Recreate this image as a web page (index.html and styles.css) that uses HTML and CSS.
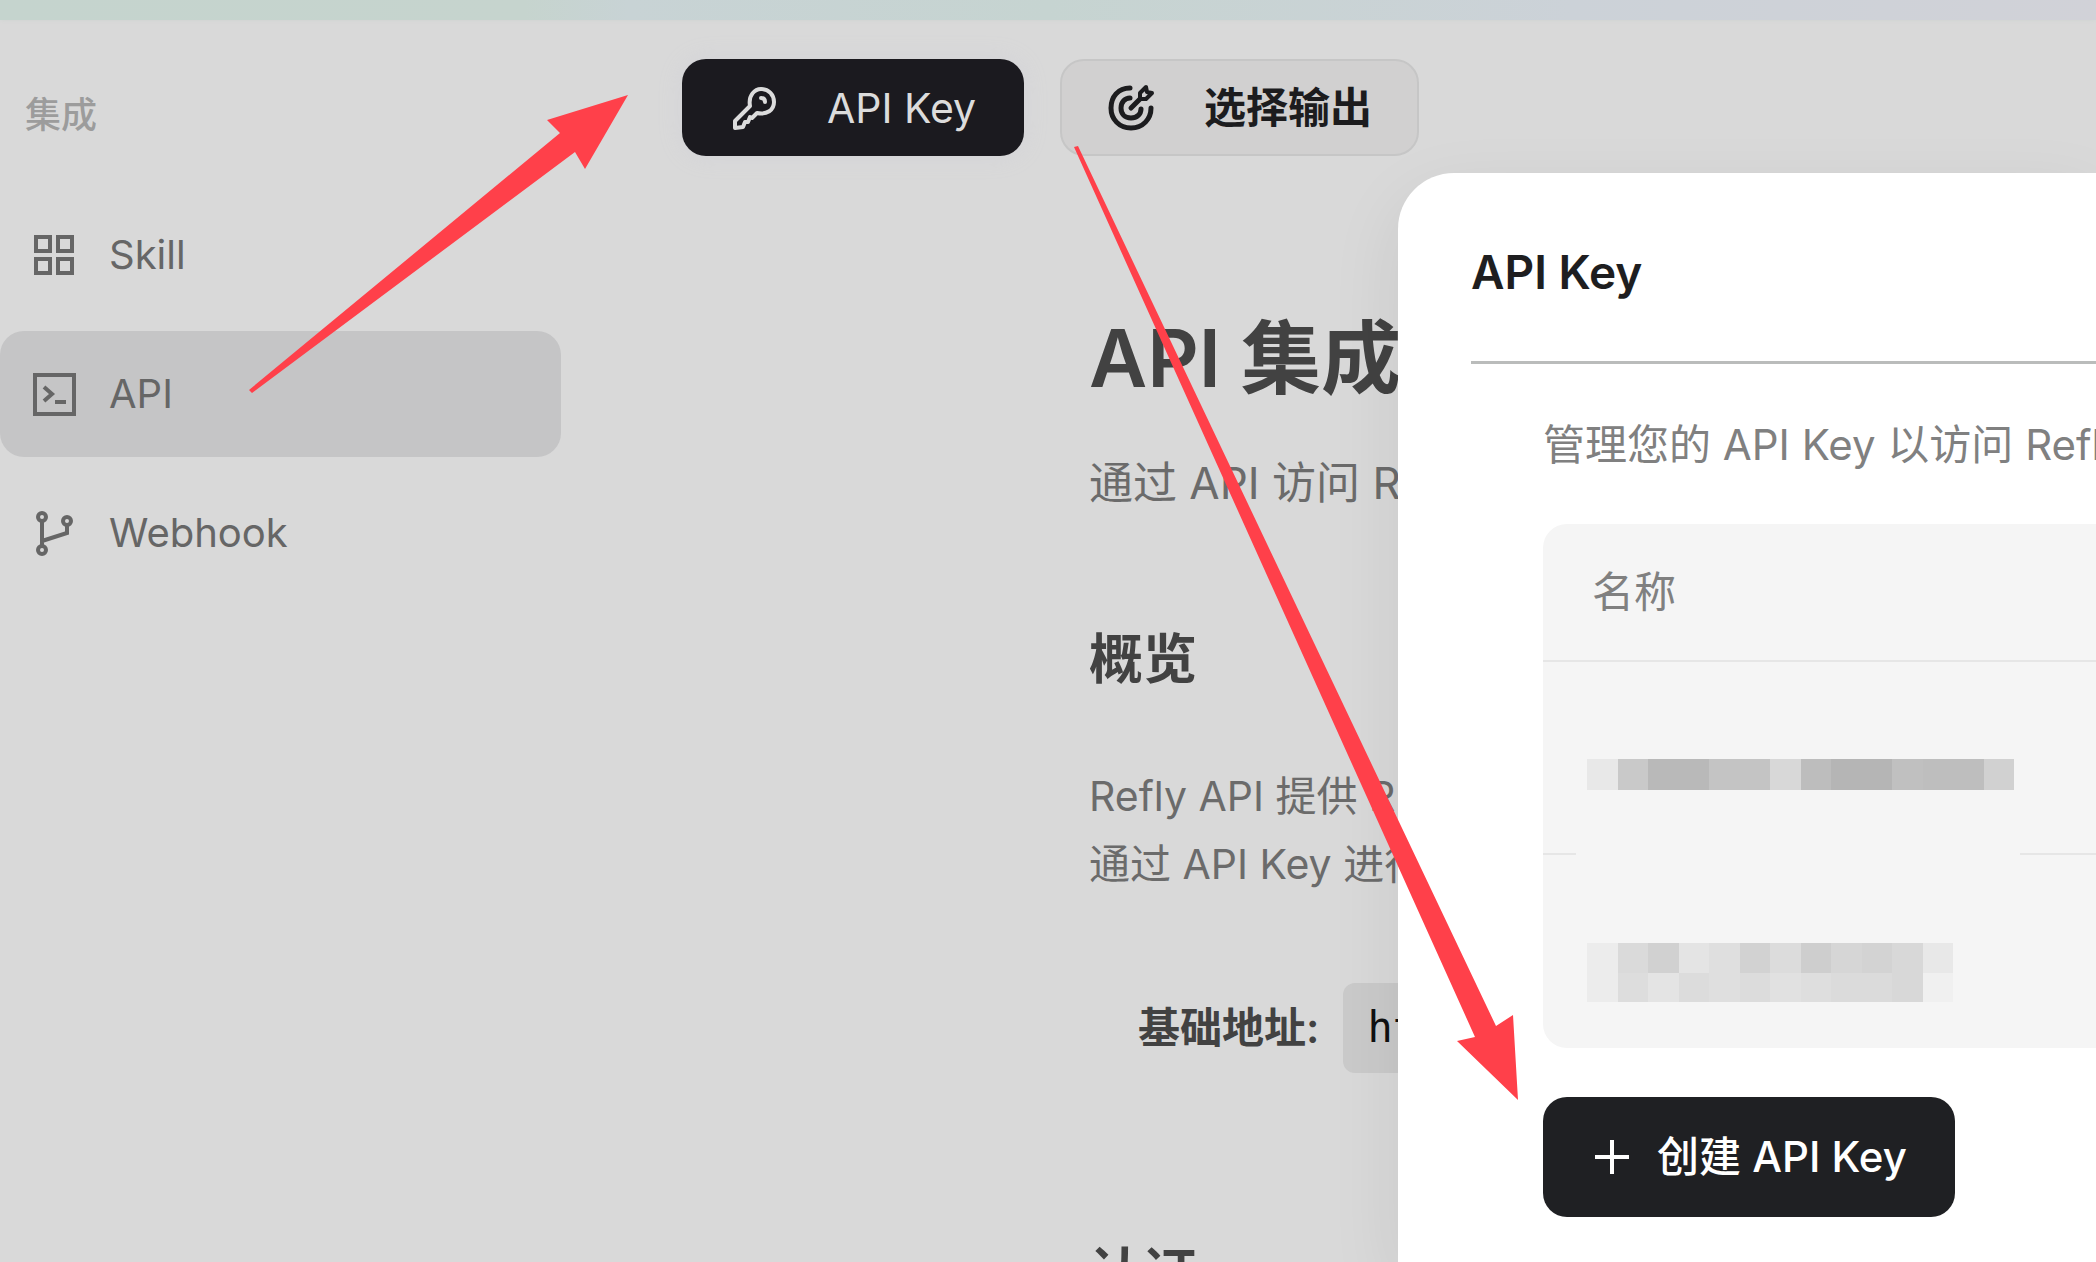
FILE: index.html
```html
<!DOCTYPE html>
<html lang="zh-CN">
<head>
<meta charset="utf-8">
<meta name="viewport" content="width=device-width, initial-scale=1">
<title>API 集成</title>
<link rel="stylesheet" href="styles.css">
</head>
<body>
<div class="strip"></div>
<div class="app">
  <nav class="sidebar" aria-label="集成">
    <p class="sidebar-title">集成</p>
    <div class="menu">
      <a class="menu-item" href="#skill">
        <svg class="icon" viewBox="0 0 48 48" fill="none" stroke="currentColor" stroke-width="4"><path d="M6 6H20V20H6ZM28 6H42V20H28ZM6 28H20V42H6ZM28 28H42V42H28Z"/></svg>
        <span>Skill</span>
      </a>
      <a class="menu-item active" href="#api" aria-current="page">
        <svg class="icon" viewBox="0 0 48 48" fill="none" stroke="currentColor" stroke-width="4"><path d="M5 5H44V44H5Z"/><path d="M14 17L22 24L14 31M25 32H36" stroke-width="4"/></svg>
        <span>API</span>
      </a>
      <a class="menu-item" href="#webhook">
        <svg class="icon" viewBox="0 0 48 48" fill="none" stroke="currentColor" stroke-width="4"><circle cx="12" cy="8" r="4"/><circle cx="12" cy="41" r="4"/><circle cx="37" cy="12" r="4"/><path d="M12 12V37M37 16V24L12 32"/></svg>
        <span>Webhook</span>
      </a>
    </div>
  </nav>
  <main class="main">
    <div class="toolbar">
      <button class="tool dark" type="button">
        <svg class="icon" viewBox="0 0 48 48" fill="none" stroke="currentColor" stroke-width="4" stroke-linejoin="round" stroke-linecap="round"><path d="M20 22C18 11 25 5 31 5C39 5 44 11 44 18C44 26 37 31 27 29L22 34L20 33L18 38L15 38L13 43L5 44L5 37Z"/><path d="M31 14C34 14 35 16 35 18" stroke-width="4"/></svg>
        <span>API Key</span>
      </button>
      <button class="tool light" type="button">
        <svg class="icon" viewBox="0 0 48 48" fill="none" stroke="currentColor" stroke-width="5" stroke-linecap="round"><path d="M23 4C11 4 4 13 4 24S12 44 24 44S44 35 44 24"/><path d="M23 14C18 14 14 18 14 24S18 34 24 34S34 30 34 25M24 24L33 15"/><path d="M33 15V9L39 3L40 8L45 9L39 15Z" stroke-width="4" stroke-linejoin="round"/></svg>
        <span>选择输出</span>
      </button>
    </div>
    <article class="doc">
      <h1>API 集成</h1>
      <p class="lead">通过 API 访问 Refly</p>
      <h2>概览</h2>
      <p class="text">Refly API 提供 REST<br>通过 API Key 进行</p>
      <p class="base"><strong>基础地址:</strong><code>https</code></p>
      <h2 class="next">认证</h2>
    </article>
  </main>
</div>

<div class="overlay">
  <section class="modal" role="dialog" aria-labelledby="modal-title">
    <h2 class="modal-title" id="modal-title">API Key</h2>
    <div class="modal-body">
      <p class="desc">管理您的 API Key 以访问 Refly</p>
      <table class="keys">
        <thead><tr><th scope="col">名称</th></tr></thead>
        <tbody>
          <tr><td><svg class="mosaic" viewBox="0 0 14 1" preserveAspectRatio="none" style="width:427px;height:31px" shape-rendering="crispEdges"><path fill="#e8e8e8" d="M0 0h1v1h-1z"/><path fill="#c9c9c9" d="M1 0h1v1h-1z"/><path fill="#b9b9b9" d="M2 0h2v1h-2z"/><path fill="#c4c4c4" d="M4 0h2v1h-2z"/><path fill="#d8d8d8" d="M6 0h1v1h-1z"/><path fill="#bdbdbd" d="M7 0h1v1h-1z"/><path fill="#b5b5b5" d="M8 0h2v1h-2z"/><path fill="#c0c0c0" d="M10 0h1v1h-1z"/><path fill="#bebebe" d="M11 0h2v1h-2z"/><path fill="#d1d1d1" d="M13 0h1v1h-1z"/></svg></td></tr>
          <tr><td><svg class="mosaic" viewBox="0 0 12 2" preserveAspectRatio="none" style="width:366px;height:59px" shape-rendering="crispEdges"><path fill="#ececec" d="M0 0h1v2h-1z"/><path fill="#dadada" d="M1 0h1v1h-1z"/><path fill="#d1d1d1" d="M2 0h1v1h-1z"/><path fill="#e4e4e4" d="M3 0h1v1h-1z"/><path fill="#dfdfdf" d="M4 0h1v2h-1z"/><path fill="#d2d2d2" d="M5 0h1v1h-1z"/><path fill="#dcdcdc" d="M6 0h1v1h-1z"/><path fill="#cecece" d="M7 0h1v1h-1z"/><path fill="#d6d6d6" d="M8 0h1v1h-1z"/><path fill="#d3d3d3" d="M9 0h1v1h-1z"/><path fill="#d8d8d8" d="M10 0h1v2h-1z"/><path fill="#e8e8e8" d="M11 0h1v1h-1z"/><path fill="#dddddd" d="M1 1h1v1h-1z"/><path fill="#e4e4e4" d="M2 1h1v1h-1z"/><path fill="#dcdcdc" d="M3 1h1v1h-1zM5 1h1v1h-1z"/><path fill="#e1e1e1" d="M6 1h1v1h-1z"/><path fill="#dedede" d="M7 1h1v1h-1z"/><path fill="#dbdbdb" d="M8 1h2v1h-2z"/><path fill="#f0f0f0" d="M11 1h1v1h-1z"/></svg></td></tr>
        </tbody>
      </table>
      <button class="create" type="button">
        <svg class="plus" viewBox="0 0 34 34" stroke="currentColor" stroke-width="4"><path d="M0 17H34M17 0V34"/></svg>
        <span>创建 API Key</span>
      </button>
    </div>
  </section>
</div>

<svg class="arrows" width="2096" height="1262" viewBox="0 0 2096 1262" fill="#ff404a" aria-hidden="true">
  <path d="M249 390L560 133L547 120L628 95L585 169L575 152L252 393Z"/>
  <path d="M1074 147L1475 1037L1457 1041L1518 1100L1513 1015L1496 1026L1078 146Z"/>
</svg>
</body>
</html>
```
FILE: styles.css
```css
* { box-sizing: border-box; }

body {
  margin: 0;
  height: 100vh;
  overflow: hidden;
  position: relative;
  background: #d9d9d9;
  color: #424242;
  font-family: Inter, "Noto Sans CJK SC", sans-serif;
  font-size: 40px;
}

h1, h2, p { margin: 0; }
button { font: inherit; border: 0; cursor: pointer; }

.strip {
  height: 20px;
  background: linear-gradient(90deg, #c5d4ce 0, #c6d4ce 25%, #c8d3d5 30%, #c6d4d1 50%, #ccd2d8 75%, #d1d2d8 100%);
  box-shadow: 0 0 4px #cdd4d1;
}

.app { display: flex; }

.sidebar {
  flex: 0 0 561px;
  padding-top: 71px;
  color: #666;
}
.sidebar-title {
  padding-left: 25px;
  font-size: 36px;
  font-weight: 500;
  line-height: 48px;
  color: #9c9c9c;
}
.menu {
  display: flex;
  flex-direction: column;
  gap: 13px;
  margin-top: 53px;
}
.menu-item {
  display: flex;
  align-items: center;
  gap: 31px;
  height: 126px;
  padding-left: 30px;
  border-radius: 24px;
  color: inherit;
  line-height: 48px;
  text-decoration: none;
}
.menu-item.active { background: #c5c5c6; }
.icon { flex: none; width: 48px; height: 48px; }

.main { flex: 1; padding-top: 39px; min-width: 0; }

.toolbar { display: flex; gap: 36px; padding-left: 121px; }
.tool {
  display: flex;
  align-items: center;
  gap: 49px;
  height: 97px;
  padding: 0 48px;
  border-radius: 24px;
  font-size: 41px;
  line-height: 48px;
}
.tool.dark {
  background: #1b1a1f;
  color: #dcdcdc;
  box-shadow: 0 0 24px #d3d3d8;
}
.tool.light {
  border: 2px solid #c6c6c6;
  background: #d1d0d0;
  color: #1c1c1e;
  font-size: 42px;
  font-weight: 600;
  padding: 0 45px;
}

.doc { padding: 152px 0 0 528px; white-space: nowrap; }
.doc h1 { font-size: 80px; font-weight: 600; line-height: 100px; }
.lead { margin-top: 43px; font-size: 44px; line-height: 64px; color: #6b6b6b; }
.doc h2 { margin-top: 109px; font-size: 54px; font-weight: 600; line-height: 72px; }
.text { margin-top: 66px; font-size: 41px; line-height: 68px; color: #6b6b6b; }
.base {
  display: flex;
  align-items: center;
  gap: 24px;
  margin-top: 85px;
  padding-left: 49px;
  font-size: 42px;
}
.base strong { font-weight: 600; line-height: 60px; }
.base code {
  padding: 0 24px;
  border-radius: 12px;
  background: #cacaca;
  color: #111;
  font-family: "DejaVu Sans Mono", monospace;
  font-size: 42px;
  line-height: 90px;
}
.doc .next { margin-top: 165px; }

.overlay {
  position: absolute;
  inset: 0;
  display: flex;
  padding: 173px 0 0 1398px;
}
.modal {
  flex: 1;
  min-width: 0;
  padding: 69px 0 0 73px;
  border-radius: 56px 0 0 0;
  background: #fff;
  box-shadow: 0 24px 72px rgba(0, 0, 0, 0.08);
  white-space: nowrap;
  overflow: hidden;
}
.modal-title {
  padding-bottom: 59px;
  border-bottom: 3px solid #babcbb;
  font-size: 46px;
  font-weight: 600;
  line-height: 60px;
  color: #1e1e20;
}
.modal-body { padding-left: 72px; }
.desc { margin-top: 51px; font-size: 42px; line-height: 60px; color: #808080; }

.keys {
  width: 100%;
  margin-top: 49px;
  border-spacing: 0;
  border-radius: 24px 0 0 24px;
  background: #f5f5f5;
}
.keys th {
  height: 138px;
  padding: 0 49px;
  border-bottom: 2px solid #e6e6e6;
  font-size: 42px;
  font-weight: 400;
  line-height: 60px;
  text-align: left;
  color: #808080;
}
.keys td { height: 193px; padding: 42px 44px 0; }
.keys tr:first-child td {
  padding-top: 32px;
  background: linear-gradient(90deg, #e6e6e6 33px, transparent 33px 477px, #e6e6e6 477px) bottom / 100% 2px no-repeat;
}
.mosaic { display: block; }

.create {
  display: flex;
  align-items: center;
  gap: 28px;
  height: 120px;
  margin-top: 49px;
  padding: 0 48px 0 52px;
  border-radius: 24px;
  background: #1f2023;
  color: #fff;
  font-size: 42px;
  font-weight: 500;
}
.create span { line-height: 60px; }
.plus { width: 34px; height: 34px; }

.arrows { position: absolute; top: 0; left: 0; pointer-events: none; }
```
